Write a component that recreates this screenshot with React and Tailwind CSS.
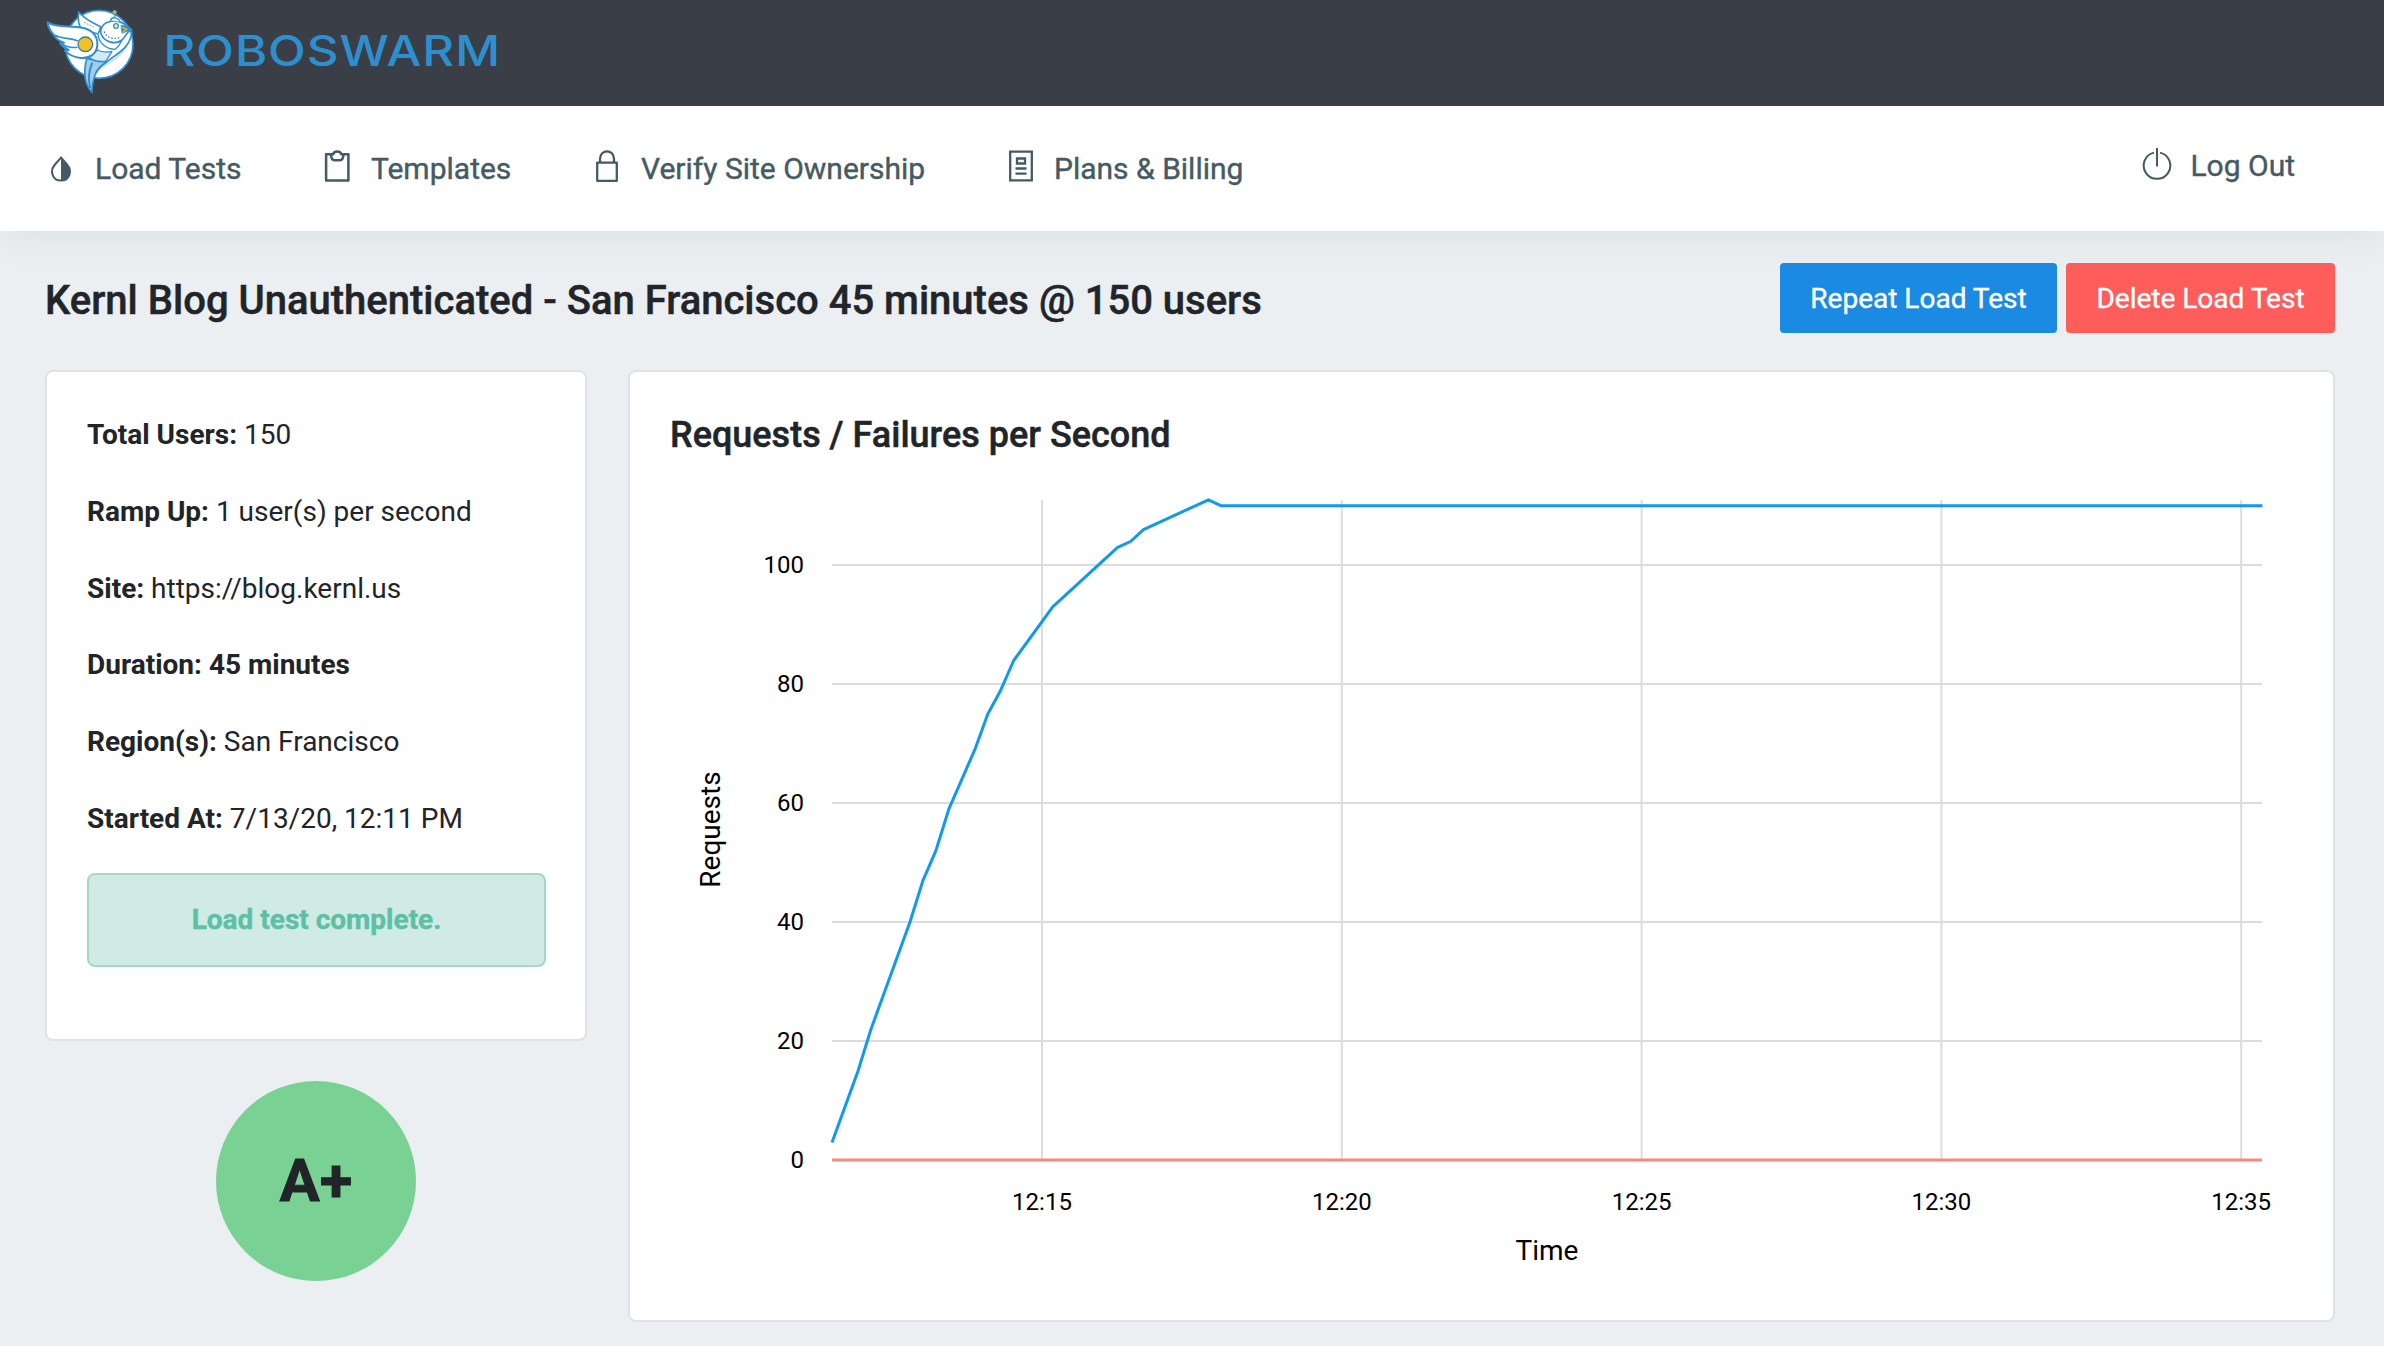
const STEP = 12.98;
const X0 = 2;
const Y0 = 672;
const UNIT = 5.95;

const samples = [
  [0, 3], [2, 15], [3, 22], [6, 40], [7, 47], [8, 52], [9, 59], [11, 69],
  [12, 75], [13, 79], [14, 84], [17, 93], [22, 103], [23, 104], [24, 106],
  [29, 111], [30, 110], [110.2, 110],
];
const points = samples
  .map(([i, v]) => `${(X0 + i * STEP).toFixed(1)},${(Y0 + 0.3 - v * UNIT).toFixed(1)}`)
  .join(" ");

const yTicks = [0, 20, 40, 60, 80, 100];
const xTicks = ["12:15", "12:20", "12:25", "12:30", "12:35"];

function Bird() {
  return (
    <svg className="h-[106px] w-[130px] shrink-0" viewBox="0 0 390 318" fill="none" strokeLinejoin="round" strokeLinecap="round">
      <circle cx="207" cy="133" r="102" fill="#fff" stroke="#2f8fd0" strokeWidth="5" />
      <path d="M301 94 C300 140 266 160 240 181 C218 199 203 204 199 222 L194 234 C206 206 226 200 250 184 C280 164 300 136 304 104 Z" fill="#b9dcf0" opacity=".7" />
      <path d="M146 36 C142 60 146 76 156 90 L206 102 L212 80 C190 70 164 58 146 36Z" fill="#fff" stroke="#2f8fd0" strokeWidth="5" />
      <path d="M164 68 L194 82" stroke="#5f9fc4" strokeWidth="3" strokeDasharray="2 7" />
      <path d="M204 100 C204 126 226 148 256 148 C264 142 270 134 274 124 L212 90Z" fill="#fff" stroke="#2f8fd0" strokeWidth="4" />
      <path d="M212 98 C212 68 240 60 263 64 C282 68 291 76 305 90 C290 94 286 112 276 120 C256 136 220 126 212 98Z" fill="#fff" stroke="#2f8fd0" strokeWidth="5" />
      <path d="M223 96 C232 116 252 118 268 113" stroke="#2278b8" strokeWidth="4" strokeDasharray="1 9" />
      <path d="M242 61 C244 50 264 50 271 66" fill="#e9f5fb" stroke="#2f8fd0" strokeWidth="4" />
      <path d="M255 50 V42" stroke="#2f8fd0" strokeWidth="4" />
      <circle cx="254" cy="37" r="6" fill="#d9b040" stroke="#5c8f9a" strokeWidth="2.5" />
      <circle cx="258" cy="78" r="7" fill="#e9eecb" stroke="#3f8fae" strokeWidth="4" />
      <path d="M274 76 C288 76 298 84 307 91 C296 92 286 96 276 100 L274 88Z" fill="#2f8fd0" stroke="#2f8fd0" strokeWidth="2" />
      <path d="M277 83 L290 87 L279 96" stroke="#e9b43d" strokeWidth="4" />
      <path d="M202 150 C214 156 230 158 246 154 L226 186 C206 190 190 184 178 172Z" fill="#d3e9f6" stroke="#2f8fd0" strokeWidth="4" />
      <path d="M170 176 C160 214 162 250 186 277 C186 256 190 236 197 220 C204 204 216 196 232 184 C214 186 198 186 184 178Z" fill="#9fcdea" stroke="#2f8fd0" strokeWidth="5" />
      <path d="M306 96 C300 142 266 158 240 178 C224 190 206 200 199 216" stroke="#2f8fd0" strokeWidth="5" />
      <path d="M186 190 C176 214 174 236 180 262" stroke="#2f8fd0" strokeWidth="6" />
      <path d="M53 67 C80 84 120 76 160 84 C188 90 204 110 202 136 C200 162 178 176 152 174 C134 172 116 164 104 152 L116 150 C104 144 96 138 90 130 L102 128 C84 122 76 114 72 106 C62 94 54 82 53 67Z" fill="#fff" stroke="#2f8fd0" strokeWidth="6" />
      <path d="M74 106 C94 116 118 114 142 122 M92 130 C110 142 124 144 140 142" stroke="#2f8fd0" strokeWidth="5" />
      <circle cx="166" cy="133" r="22" fill="#f2bf27" stroke="#3a7c96" strokeWidth="4" />
    </svg>
  );
}

function DropIcon() {
  return (
    <svg className="h-[26px] w-[22px]" viewBox="0 0 22 26" fill="none">
      <path d="M11 1.6 L4.6 9 C-0.5 15 2.6 24.6 11 24.6 C19.4 24.6 22.5 15 17.4 9Z" stroke="#455a64" strokeWidth="2" />
      <path d="M11 1.6 L17.4 9 C22.5 15 19.4 24.6 11 24.6Z" fill="#455a64" />
    </svg>
  );
}

function ClipboardIcon() {
  return (
    <svg className="h-8 w-[26px]" viewBox="0 0 26 32" fill="none" stroke="#455a64" strokeWidth="2.5" strokeLinejoin="round">
      <path d="M7 4.2H2.1V30.6H24.4V4.2H19.4" />
      <path d="M7 4.2H9.2C9.8 0.6 16.6 0.6 17.2 4.2H19.4C19.4 8 17.8 10.2 15.7 10.2H10.7C8.6 10.2 7 8 7 4.2Z" />
    </svg>
  );
}

function LockIcon() {
  return (
    <svg className="h-8 w-[22px]" viewBox="0 0 22 32" fill="none" stroke="#455a64" strokeWidth="2.3" strokeLinejoin="round">
      <path d="M1.2 12.6H20.8V30.8H1.2Z" />
      <path d="M4 12.6V9C4 -1.2 18 -1.2 18 9V12.6" />
    </svg>
  );
}

function BillIcon() {
  return (
    <svg className="h-8 w-6" viewBox="0 0 24 32" fill="none" stroke="#455a64" strokeWidth="2.3">
      <path d="M1.2 1.6H22.8V30.4H1.2Z" />
      <path d="M8 8.5H16V13.5H8Z M6.5 18.5H17.5 M6.5 23.7H17.5" />
    </svg>
  );
}

function PowerIcon() {
  return (
    <svg className="h-[34px] w-[30px]" viewBox="0 0 30 34" fill="none" stroke="#455a64" strokeWidth="2">
      <path d="M18 5.6A13.3 13.3 0 1 1 12 5.6" />
      <path d="M15 1V19.5" />
    </svg>
  );
}

function NavItem({ icon, label, className }) {
  return (
    <a className={`flex items-center whitespace-nowrap ${className}`}>
      {icon}
      <span>{label}</span>
    </a>
  );
}

function Detail({ name, children, bold }) {
  return (
    <p className="mb-[34.8px] h-[42px] leading-[42px] whitespace-nowrap">
      <b className="font-bold">{name}</b> <span className={bold ? "font-bold" : ""}>{children}</span>
    </p>
  );
}

function Chart() {
  return (
    <svg className="ml-[-40px] block h-[800px] w-[1664px]" viewBox="-200 0 1664 800" fill="none">
      {xTicks.map((t, i) => (
        <g key={t}>
          <path d={`M${212 + i * 299.8} 12V672`} stroke="#dcdcdc" strokeWidth="2" />
          <text x={212 + i * 299.8} y="722" textAnchor="middle" fontSize="24" fill="#000">{t}</text>
        </g>
      ))}
      {yTicks.map((t) => (
        <g key={t}>
          <path d={`M2 ${Y0 - t * UNIT}H1432`} stroke="#dcdcdc" strokeWidth="2" />
          <text x="-26" y={Y0 - t * UNIT + 8} textAnchor="end" fontSize="24" fill="#000">{t}</text>
        </g>
      ))}
      <path d="M2 672H1432" stroke="#f58b80" strokeWidth="3" />
      <polyline points={points} stroke="#1199f0" strokeWidth="3" strokeLinejoin="round" />
      <text x="717" y="772" textAnchor="middle" fontSize="28" fill="#000">Time</text>
      <text transform="translate(-110 341.5) rotate(-90)" textAnchor="middle" fontSize="28" fill="#000">Requests</text>
    </svg>
  );
}

export default function App() {
  return (
    <div className="flex h-[1346px] w-[2384px] flex-col overflow-hidden bg-[#ebeff2] font-['Roboto',sans-serif] text-[28px] text-[#212529]">
      <header className="relative z-10 flex h-[106px] shrink-0 items-center bg-[#3a3f47] pl-[30px]">
        <Bird />
        <span className="mb-1 origin-left scale-x-[1.17] pl-[3px] font-['Inter',sans-serif] text-[42px] leading-none font-medium tracking-[0.8px] text-[#2e8fcf]">
          ROBOSWARM
        </span>
      </header>

      <nav className="flex h-[125px] shrink-0 items-center bg-white pl-[50px] text-[30px] text-[#455a64] shadow-[0_0_40px_rgba(60,80,80,0.1)] [-webkit-text-stroke:0.4px_#455a64]">
        <NavItem className="w-[274px] gap-[23px]" icon={<DropIcon />} label="Load Tests" />
        <NavItem className="w-[272px] gap-[21px] [&>svg]:-mt-1.5" icon={<ClipboardIcon />} label="Templates" />
        <NavItem className="w-[413px] gap-[23px] [&>svg]:-mt-1.5" icon={<LockIcon />} label="Verify Site Ownership" />
        <NavItem className="gap-[21px] [&>svg]:-mt-1.5" icon={<BillIcon />} label="Plans &amp; Billing" />
        <NavItem className="mr-[89px] mb-[6px] ml-auto gap-[18px] [&>svg]:-mt-1" icon={<PowerIcon />} label="Log Out" />
      </nav>

      <main className="px-[45px] pt-8">
        <div className="flex h-[70px] items-center justify-between pr-1">
          <h1 className="mt-[5px] text-[40px] leading-[48px] font-medium whitespace-nowrap [-webkit-text-stroke:0.5px_#212529]">
            Kernl Blog Unauthenticated - San Francisco 45 minutes @ 150 users
          </h1>
          <div className="flex gap-[9px] text-white [-webkit-text-stroke:0.4px_#fff]">
            <button className="h-[70px] w-[277px] rounded-[4px] bg-[#1a8ae2] pt-0.5">Repeat Load Test</button>
            <button className="h-[70px] w-[269px] rounded-[4px] bg-[#ff5c5c] pt-0.5">Delete Load Test</button>
          </div>
        </div>

        <div className="mt-[37px] flex items-start gap-[41px]">
          <aside className="flex w-[542px] flex-col items-center">
            <section className="h-[671px] w-full rounded-lg border-2 border-[#dfe2e4] bg-white pt-[42px] pr-[39px] pl-10">
              <Detail name="Total Users:">150</Detail>
              <Detail name="Ramp Up:">1 user(s) per second</Detail>
              <Detail name="Site:">https://blog.kernl.us</Detail>
              <Detail name="Duration:" bold>45 minutes</Detail>
              <Detail name="Region(s):">San Francisco</Detail>
              <Detail name="Started At:">7/13/20, 12:11 PM</Detail>
              <div className="-mt-0.5 flex h-[94px] items-center justify-center rounded-lg border-2 border-[#a2d8c9] bg-[#cfebe4] font-bold text-[#5dbfa6] [-webkit-text-stroke:0.4px_#5dbfa6]">
                Load test complete.
              </div>
            </section>
            <div className="mt-10 flex h-[200px] w-[200px] items-center justify-center rounded-full bg-[#79d194] text-[60px] font-bold [-webkit-text-stroke:0.8px_#212529]">
              A+
            </div>
          </aside>

          <section className="h-[952px] w-[1707px] rounded-lg border-2 border-[#dfe2e4] bg-white pt-[42px] pl-10">
            <h2 className="text-[36px] leading-[42px] font-medium [-webkit-text-stroke:0.5px_#212529]">
              Requests / Failures per Second
            </h2>
            <div className="mt-8">
              <Chart />
            </div>
          </section>
        </div>
      </main>
    </div>
  );
}
